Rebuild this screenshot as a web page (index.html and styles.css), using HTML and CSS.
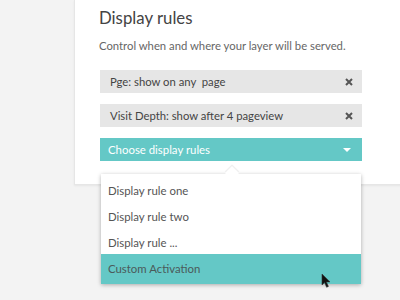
FILE: index.html
```html
<!DOCTYPE html>
<html lang="en">
<head>
    <meta charset="UTF-8">
    <title>Display rules</title>
    <link rel="stylesheet" href="styles.css">
</head>
<body>
    <div class="page">
        <div class="card">
            <h2 class="title">Display rules</h2>
            <p class="sub">Control when and where your layer will be served.</p>
            <div class="rule">
                <span>Pge: show on any &nbsp;page</span>
                <svg class="close" width="8" height="8" viewBox="0 0 8 8">
                    <path d="M1 1 L7 7 M7 1 L1 7" stroke="#555" stroke-width="2"/>
                </svg>
            </div>
            <div class="rule">
                <span>Visit Depth: show after 4 pageview</span>
                <svg class="close" width="8" height="8" viewBox="0 0 8 8">
                    <path d="M1 1 L7 7 M7 1 L1 7" stroke="#555" stroke-width="2"/>
                </svg>
            </div>
            <div class="select">
                <div class="choose">
                    <span>Choose display rules</span>
                    <span class="caret"></span>
                </div>
                <ul class="menu">
                    <li>Display rule one</li>
                    <li>Display rule two</li>
                    <li>Display rule ...</li>
                    <li class="active">Custom Activation
                        <svg class="cursor" width="12" height="16" viewBox="0 0 12 16">
                            <path d="M1 1 L1 12 L3.6 9.6 L5.6 14.2 L7.4 13.4 L5.4 8.9 L9 8.9 Z" fill="#111" stroke="#333" stroke-width="0.6"/>
                        </svg>
                    </li>
                </ul>
            </div>
        </div>
    </div>
</body>
</html>
```

FILE: styles.css
```css
body{
    margin: 0;
    background-color: #f3f3f3;
    font-family: Lato, 'Open Sans', sans-serif;
}

.page{
    width: 400px;
    height: 300px;
    overflow: hidden;
}

.card{
    margin-left: 74px;
    width: 340px;
    height: 185px;
    background-color: white;
    border: 1px solid #e6e6e6;
    border-top: none;
    box-shadow: 0 1px 2px rgba(0, 0, 0, 0.06);
    box-sizing: border-box;
    padding: 5px 0 0 25px;
}

.title{
    margin: 0 0 0 -1px;
    font-size: 16.8px;
    font-weight: 400;
    line-height: 26px;
    color: #444;
}

.sub{
    margin: 7px 0 0 -1px;
    font-size: 11.3px;
    line-height: 16px;
    color: #666;
}

.rule{
    display: flex;
    justify-content: space-between;
    align-items: center;
    width: 262px;
    height: 23px;
    box-sizing: border-box;
    margin-top: 11px;
    padding: 0 9px 0 10px;
    background-color: #e6e6e6;
    font-size: 11.3px;
    color: #444;
}

.sub + .rule{
    margin-top: 16px;
}

.select{
    position: relative;
    width: 262px;
    margin-top: 11px;
}

.choose{
    display: flex;
    justify-content: space-between;
    align-items: center;
    height: 23px;
    box-sizing: border-box;
    padding: 0 8px 0 8px;
    background-color: #64c8c6;
    color: white;
    font-size: 11.4px;
}

.caret{
    width: 0;
    height: 0;
    border-left: 4px solid transparent;
    border-right: 4px solid transparent;
    border-top: 4px solid white;
    margin-right: 3px;
}

.menu{
    position: absolute;
    top: 36px;
    left: 1px;
    width: 260px;
    margin: 0;
    padding: 0;
    list-style: none;
    background-color: white;
    box-shadow: 0 1px 4px rgba(0, 0, 0, 0.3);
}

.menu::before{
    content: '';
    position: absolute;
    top: -6px;
    left: 126px;
    width: 10px;
    height: 10px;
    background-color: white;
    transform: rotate(45deg);
    box-shadow: -1px -1px 1px rgba(0, 0, 0, 0.08);
}

.menu li{
    position: relative;
    height: 26px;
    line-height: 29px;
    padding-left: 7px;
    font-size: 11.4px;
    color: #555;
}

.menu li:first-child{
    padding-top: 2px;
}

.menu li.active{
    height: 30px;
    background-color: #64c8c6;
    color: #4b5a5a;
}

.cursor{
    position: absolute;
    left: 220px;
    top: 19px;
}
```
